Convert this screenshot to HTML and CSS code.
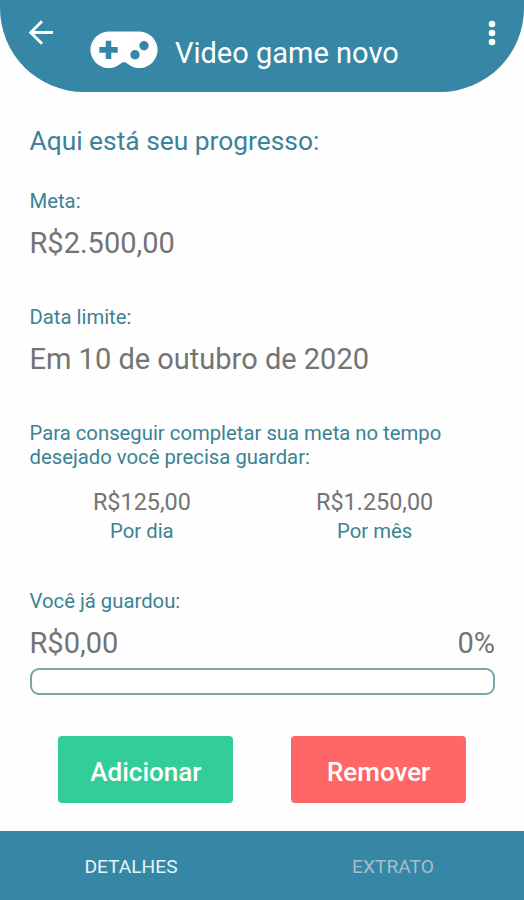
FILE: index.html
```html
<!DOCTYPE html>
<html lang="pt-BR">
<head>
<meta charset="utf-8">
<title>Video game novo</title>
<link rel="stylesheet" href="styles.css">
</head>
<body>
<div class="screen">
  <header class="header">
    <svg class="back" viewBox="0 0 26 26" fill="none" stroke="#fff" stroke-width="2.9"><path d="M25 12.5H3M14 1.2L2.7 12.5L14 23.8"/></svg>
    <svg class="gamepad" viewBox="0 0 68 38"><path fill="#fff" d="M19 0.500H49A18.300 18.300 0 1 1 38.500 33.600Q34 28.500 29.500 33.600A18.300 18.300 0 1 1 19 0.500Z"/><path fill="#3587a5" d="M15.700 9.800h5.600v6.300h6.400v5.600h-6.400v6.300h-5.600v-6.300H9.300v-5.600h6.400z"/><circle cx="54" cy="14.800" r="4.700" fill="#3587a5"/><circle cx="45" cy="23.700" r="4.700" fill="#3587a5"/></svg>
    <h1 class="title">Video game novo</h1>
    <svg class="more" viewBox="0 0 8 26" fill="#fff"><circle cx="4" cy="4" r="3.300"/><circle cx="4" cy="13" r="3.300"/><circle cx="4" cy="22" r="3.300"/></svg>
  </header>
  <main class="content">
    <h2 class="heading">Aqui está seu progresso:</h2>
    <section class="field">
      <p class="label">Meta:</p>
      <p class="value">R$2.500,00</p>
    </section>
    <section class="field">
      <p class="label">Data limite:</p>
      <p class="value">Em 10 de outubro de 2020</p>
    </section>
    <section class="plan">
      <p class="label">Para conseguir completar sua meta no tempo<br>desejado você precisa guardar:</p>
      <div class="rates">
        <div class="rate"><p class="amount">R$125,00</p><p class="label">Por dia</p></div>
        <div class="rate"><p class="amount">R$1.250,00</p><p class="label">Por mês</p></div>
      </div>
    </section>
    <section class="saved">
      <p class="label">Você já guardou:</p>
      <div class="totals"><p class="value">R$0,00</p><p class="value">0%</p></div>
      <div class="bar"></div>
    </section>
    <div class="actions">
      <button class="btn add">Adicionar</button>
      <button class="btn remove">Remover</button>
    </div>
  </main>
  <nav class="tabs">
    <a class="tab active">DETALHES</a>
    <a class="tab">EXTRATO</a>
  </nav>
</div>
</body>
</html>
```
FILE: styles.css
```css
* { box-sizing: border-box; margin: 0; padding: 0; }
body { background: #fefefe; font-family: Roboto, sans-serif; }
.screen { width: 524px; height: 900px; display: flex; flex-direction: column; overflow: hidden; }
.header { height: 92px; background: #3587a5; border-radius: 0 0 84px 84px; display: flex; align-items: flex-start; padding: 0 28.5px 0 28px; color: #fff; }
.back { width: 26px; height: 26px; margin-top: 20px; }
.gamepad { width: 68px; height: 38px; margin: 31px 0 0 36px; }
.title { font-size: 29px; line-height: 34px; font-weight: 400; margin: 36px 0 0 17px; white-space: nowrap; }
.more { width: 8px; height: 26px; margin: 20px 0 0 auto; }
.content { flex: 1; padding: 34px 29px 0 29.5px; display: flex; flex-direction: column; }
.heading { color: #3b8299; font-size: 26.35px; line-height: 30px; font-weight: 400; margin-bottom: 33px; }
.label { color: #3b8294; font-size: 20.3px; line-height: 24px; }
.value { color: #747474; font-size: 29px; line-height: 34px; }
.field { display: flex; flex-direction: column; gap: 13px; margin-bottom: 45px; }
.plan { margin-bottom: 46px; }
.rates { display: grid; grid-template-columns: 1fr 1fr; margin: 19px 4px 0 -4px; text-align: center; }
.amount { color: #747474; font-size: 23.4px; line-height: 28px; margin-bottom: 3px; }
.totals { display: flex; justify-content: space-between; margin: 13px 0 8px; }
.bar { height: 27px; border: 2px solid #76a7a8; border-radius: 9px; background: #fff; }
.actions { display: grid; grid-template-columns: 1fr 1fr; justify-items: center; margin-top: 41px; }
.btn { width: 175px; height: 66.5px; border: 0; border-radius: 4px; color: #fff; font: 500 26px/30px Roboto, sans-serif; padding-top: 5px; }
.add { background: #33cd99; }
.remove { background: #ff6666; }
.tabs { height: 69.5px; background: #3587a5; display: grid; grid-template-columns: 1fr 1fr; align-items: center; text-align: center; padding-top: 3px; }
.tab { color: #a3c0cc; font-size: 19.2px; line-height: 24px; }
.active { color: #e4f4f9; }
```
